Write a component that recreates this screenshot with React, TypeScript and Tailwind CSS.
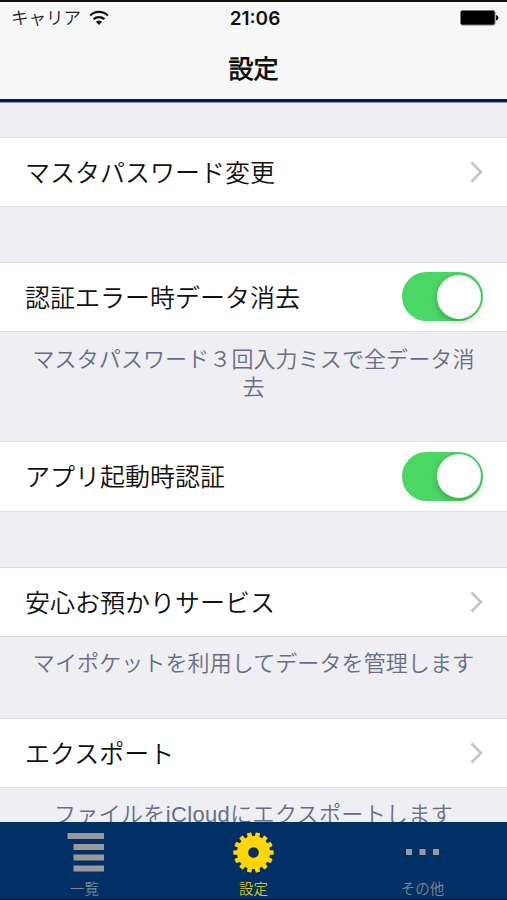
import React from "react";

type RowProps = {
  label: string;
  toggle?: boolean;
  className: string;
};

const TEETH = 14;

function WifiIcon() {
  return (
    <svg width="20" height="16" viewBox="0 0 20 16" fill="none" stroke="#111" strokeWidth="2.3">
      <path d="M1.2 5.5a12.6 12.6 0 0 1 17.6 0" />
      <path d="M4.6 9.2a7.8 7.8 0 0 1 10.8 0" />
      <path d="M6.9 11.8a4.6 4.6 0 0 1 6.2 0L10 15z" fill="#111" stroke="none" />
    </svg>
  );
}

function BatteryIcon() {
  return (
    <svg width="39" height="16" viewBox="0 0 39 16">
      <rect x="0.5" y="0.5" width="34.5" height="14.5" rx="2" fill="#000" stroke="#777" />
      <path d="M36 5c3.2.8 3.2 4.7 0 5.5z" fill="#111" />
    </svg>
  );
}

function Chevron() {
  return (
    <svg width="14" height="22" viewBox="0 0 14 22" fill="none" stroke="#c4c4c8" strokeWidth="2.6">
      <path d="M1.5 1.5L11 11L1.5 20.5" />
    </svg>
  );
}

function Toggle() {
  return (
    <div className="flex h-[49px] w-[81px] items-center justify-end rounded-full bg-[#4bd763] pr-0.5">
      <div className="size-11 rounded-full bg-white shadow-[0_3px_7px_rgba(0,0,0,0.22)]" />
    </div>
  );
}

function GearIcon() {
  return (
    <svg width="41" height="41" viewBox="-20.5 -20.5 41 41" fill="#fed700">
      {Array.from({ length: TEETH }, (_, i) => (
        <rect key={i} x="12" y="-2.3" width="8.2" height="4.6" rx="0.8" transform={`rotate(${(i * 360) / TEETH})`} />
      ))}
      <circle r="10.9" fill="none" stroke="#fed700" strokeWidth="11.2" />
    </svg>
  );
}

function ListIcon() {
  return (
    <svg width="38" height="40" viewBox="0 0 38 40" fill="#999a9c">
      <rect x="1.5" y="1" width="36.5" height="6" />
      <rect x="7.5" y="12" width="30.5" height="6" />
      <rect x="7.5" y="22.5" width="30.5" height="6" />
      <rect x="7.5" y="33.5" width="30.5" height="6" />
    </svg>
  );
}

function MoreIcon() {
  return (
    <svg width="34" height="6" viewBox="0 0 34 6" fill="#999a9c">
      <rect width="6" height="6" />
      <rect x="13.5" width="6" height="6" />
      <rect x="27" width="6" height="6" />
    </svg>
  );
}

function Row({ label, toggle, className }: RowProps) {
  return (
    <div className={`flex shrink-0 items-center justify-between border-y border-[#e0e0e3] bg-white pl-[25px] text-[25px] leading-none text-[#111] ${className}`}>
      <span className="pt-0.5 whitespace-nowrap">{label}</span>
      {toggle ? (
        <div className="mr-6 mb-px">
          <Toggle />
        </div>
      ) : (
        <div className="mr-[23px]">
          <Chevron />
        </div>
      )}
    </div>
  );
}

function Note({ text, className }: { text: string; className: string }) {
  return (
    <p className={`shrink-0 px-8 text-center text-[22px] leading-7 text-[#696d86] ${className}`}>
      {text}
    </p>
  );
}

function Tab({ label, active, children }: { label: string; active?: boolean; children: React.ReactNode }) {
  return (
    <div className={`flex flex-1 flex-col items-center text-[14.5px] leading-none ${active ? "text-[#d5c51c]" : "text-[#7e8894]"}`}>
      <div className="flex h-[60px] items-center justify-center">{children}</div>
      <span>{label}</span>
    </div>
  );
}

export default function App() {
  return (
    <div className="flex h-[900px] w-[507px] flex-col overflow-hidden bg-[#eeeef3] font-['Liberation_Sans','Noto_Sans_CJK_JP_DemiLight','Noto_Sans_CJK_JP',sans-serif] font-[350]">
      <header className="h-[102px] shrink-0 border-t-2 border-b-[3px] border-t-[#111] border-b-[#04194d] bg-[#f7f7f8]">
        <div className="grid h-8 grid-cols-3 items-center pr-2 pl-[11px]">
          <div className="flex items-center gap-2 text-[17.5px] leading-none text-[#222]">
            <span className="pt-0.5">キャリア</span>
            <WifiIcon />
          </div>
          <span className="text-center font-['Inter','Liberation_Sans',sans-serif] text-[19px] leading-none font-semibold text-[#111]">21:06</span>
          <div className="flex justify-end">
            <BatteryIcon />
          </div>
        </div>
        <h1 className="mt-[23px] text-center text-[25px] leading-none font-bold text-[#111]">設定</h1>
      </header>
      <div className="h-px shrink-0 bg-[#8b9abb]" />

      <main className="flex min-h-0 flex-1 flex-col overflow-hidden">
        <Row label="マスタパスワード変更" className="mt-[34px] h-[70px]" />
        <Row label="認証エラー時データ消去" toggle className="mt-[55px] h-[70px]" />
        <Note text="マスタパスワード３回入力ミスで全データ消去" className="mt-[14px] h-14 tracking-[0.1px]" />
        <Row label="アプリ起動時認証" toggle className="mt-[39px] h-[71px]" />
        <Row label="安心お預かりサービス" className="mt-[55px] h-[70px]" />
        <Note text="マイポケットを利用してデータを管理します" className="mt-[13px] h-7 tracking-[0.1px]" />
        <Row label="エクスポート" className="mt-10 h-[70px]" />
        <Note text="ファイルをiCloudにエクスポートします" className="mt-[13px] h-7 tracking-[0.35px]" />
      </main>

      <nav className="flex h-[78px] shrink-0 border-b border-[#00102c] bg-[#003066]">
        <Tab label="一覧">
          <ListIcon />
        </Tab>
        <Tab label="設定" active>
          <GearIcon />
        </Tab>
        <Tab label="その他">
          <MoreIcon />
        </Tab>
      </nav>
    </div>
  );
}
